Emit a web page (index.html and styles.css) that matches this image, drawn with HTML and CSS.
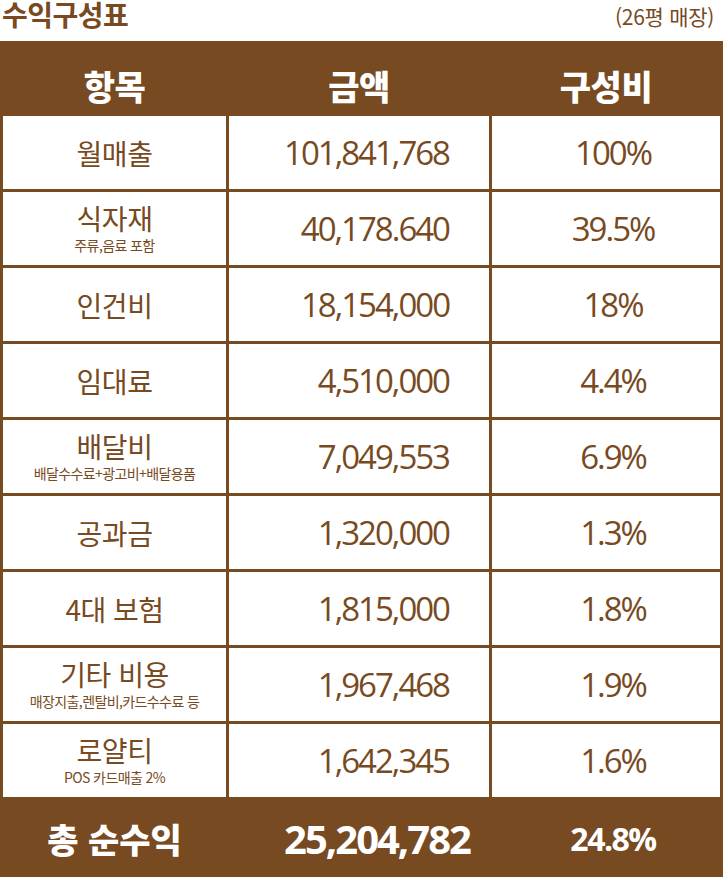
FILE: index.html
```html
<!DOCTYPE html>
<html lang="ko">
<head>
<meta charset="utf-8">
<title>수익구성표</title>
<link rel="stylesheet" href="styles.css">
</head>
<body>
<div class="page">
  <div class="titlebar">
    <h1 class="title">수익구성표</h1>
    <span class="note">(26평 매장)</span>
  </div>
  <div class="table">
    <div class="cell head">항목</div>
    <div class="cell head">금액</div>
    <div class="cell head">구성비</div>

    <div class="cell label"><span class="main">월매출</span></div>
    <div class="cell amount">101,841,768</div>
    <div class="cell pct">100%</div>

    <div class="cell label"><span class="main">식자재</span><span class="sub">주류,음료 포함</span></div>
    <div class="cell amount">40,178.640</div>
    <div class="cell pct">39.5%</div>

    <div class="cell label"><span class="main">인건비</span></div>
    <div class="cell amount">18,154,000</div>
    <div class="cell pct">18%</div>

    <div class="cell label"><span class="main">임대료</span></div>
    <div class="cell amount">4,510,000</div>
    <div class="cell pct">4.4%</div>

    <div class="cell label"><span class="main">배달비</span><span class="sub">배달수수료+광고비+배달용품</span></div>
    <div class="cell amount">7,049,553</div>
    <div class="cell pct">6.9%</div>

    <div class="cell label"><span class="main">공과금</span></div>
    <div class="cell amount">1,320,000</div>
    <div class="cell pct">1.3%</div>

    <div class="cell label"><span class="main">4대 보험</span></div>
    <div class="cell amount">1,815,000</div>
    <div class="cell pct">1.8%</div>

    <div class="cell label"><span class="main">기타 비용</span><span class="sub">매장지출,렌탈비,카드수수료 등</span></div>
    <div class="cell amount">1,967,468</div>
    <div class="cell pct">1.9%</div>

    <div class="cell label"><span class="main">로얄티</span><span class="sub">POS 카드매출 2%</span></div>
    <div class="cell amount">1,642,345</div>
    <div class="cell pct">1.6%</div>

    <div class="cell foot foot-label">총 순수익</div>
    <div class="cell foot foot-amount">25,204,782</div>
    <div class="cell foot foot-pct">24.8%</div>
  </div>
</div>
</body>
</html>
```

FILE: styles.css
```css
* { box-sizing: border-box; margin: 0; padding: 0; }

html, body {
  background: #ffffff;
}

body {
  margin: 0;
  font-family: "Noto Sans CJK KR", "Noto Sans", sans-serif;
  color: #774a22;
}

.page {
  width: 723px;
}

.titlebar {
  height: 41px;
  display: flex;
  justify-content: space-between;
  align-items: flex-start;
}

.title {
  font-size: 28px;
  font-weight: 700;
  line-height: 30px;
  letter-spacing: -0.5px;
  margin-left: 2px;
  margin-top: -1px;
  color: #774a22;
}

.note {
  font-size: 21px;
  font-weight: 400;
  line-height: 32px;
  letter-spacing: -0.3px;
  margin-right: 9px;
  color: #774a22;
}

.table {
  display: grid;
  grid-template-columns: 223px 260px 228px;
  grid-template-rows: 72px repeat(9, 73px) 77px;
  gap: 3px;
  background: #774a22;
  padding: 0 3px;
}

.cell {
  background: #ffffff;
  display: flex;
  flex-direction: column;
  align-items: center;
  justify-content: center;
}

.head {
  background: #774a22;
  color: #ffffff;
  font-size: 34px;
  font-weight: 900;
  letter-spacing: -0.5px;
  padding-top: 17px;
}

.label .main {
  font-size: 28px;
  line-height: 28px;
  letter-spacing: -0.5px;
}

.label .sub {
  font-size: 14px;
  line-height: 15px;
  letter-spacing: -0.6px;
  margin-top: 6px;
}

.amount {
  align-items: flex-end;
  padding-right: 40px;
  font-family: "Open Sans", "Noto Sans", sans-serif;
  font-size: 33px;
  font-weight: 400;
  letter-spacing: -2px;
  line-height: 36px;
}

.pct {
  padding-left: 14px;
  font-family: "Open Sans", "Noto Sans", sans-serif;
  font-size: 33px;
  font-weight: 400;
  letter-spacing: -2px;
  line-height: 36px;
}

.foot {
  background: #774a22;
  color: #ffffff;
  font-weight: 700;
}

.foot-label {
  font-size: 34px;
  font-weight: 900;
  letter-spacing: 0;
}

.foot-amount {
  padding-left: 36px;
  font-family: "Open Sans", "Noto Sans", sans-serif;
  font-size: 40px;
  letter-spacing: -2px;
}

.foot-pct {
  padding-left: 14px;
  font-family: "Open Sans", "Noto Sans", sans-serif;
  font-size: 32px;
  letter-spacing: -1.5px;
}
```
